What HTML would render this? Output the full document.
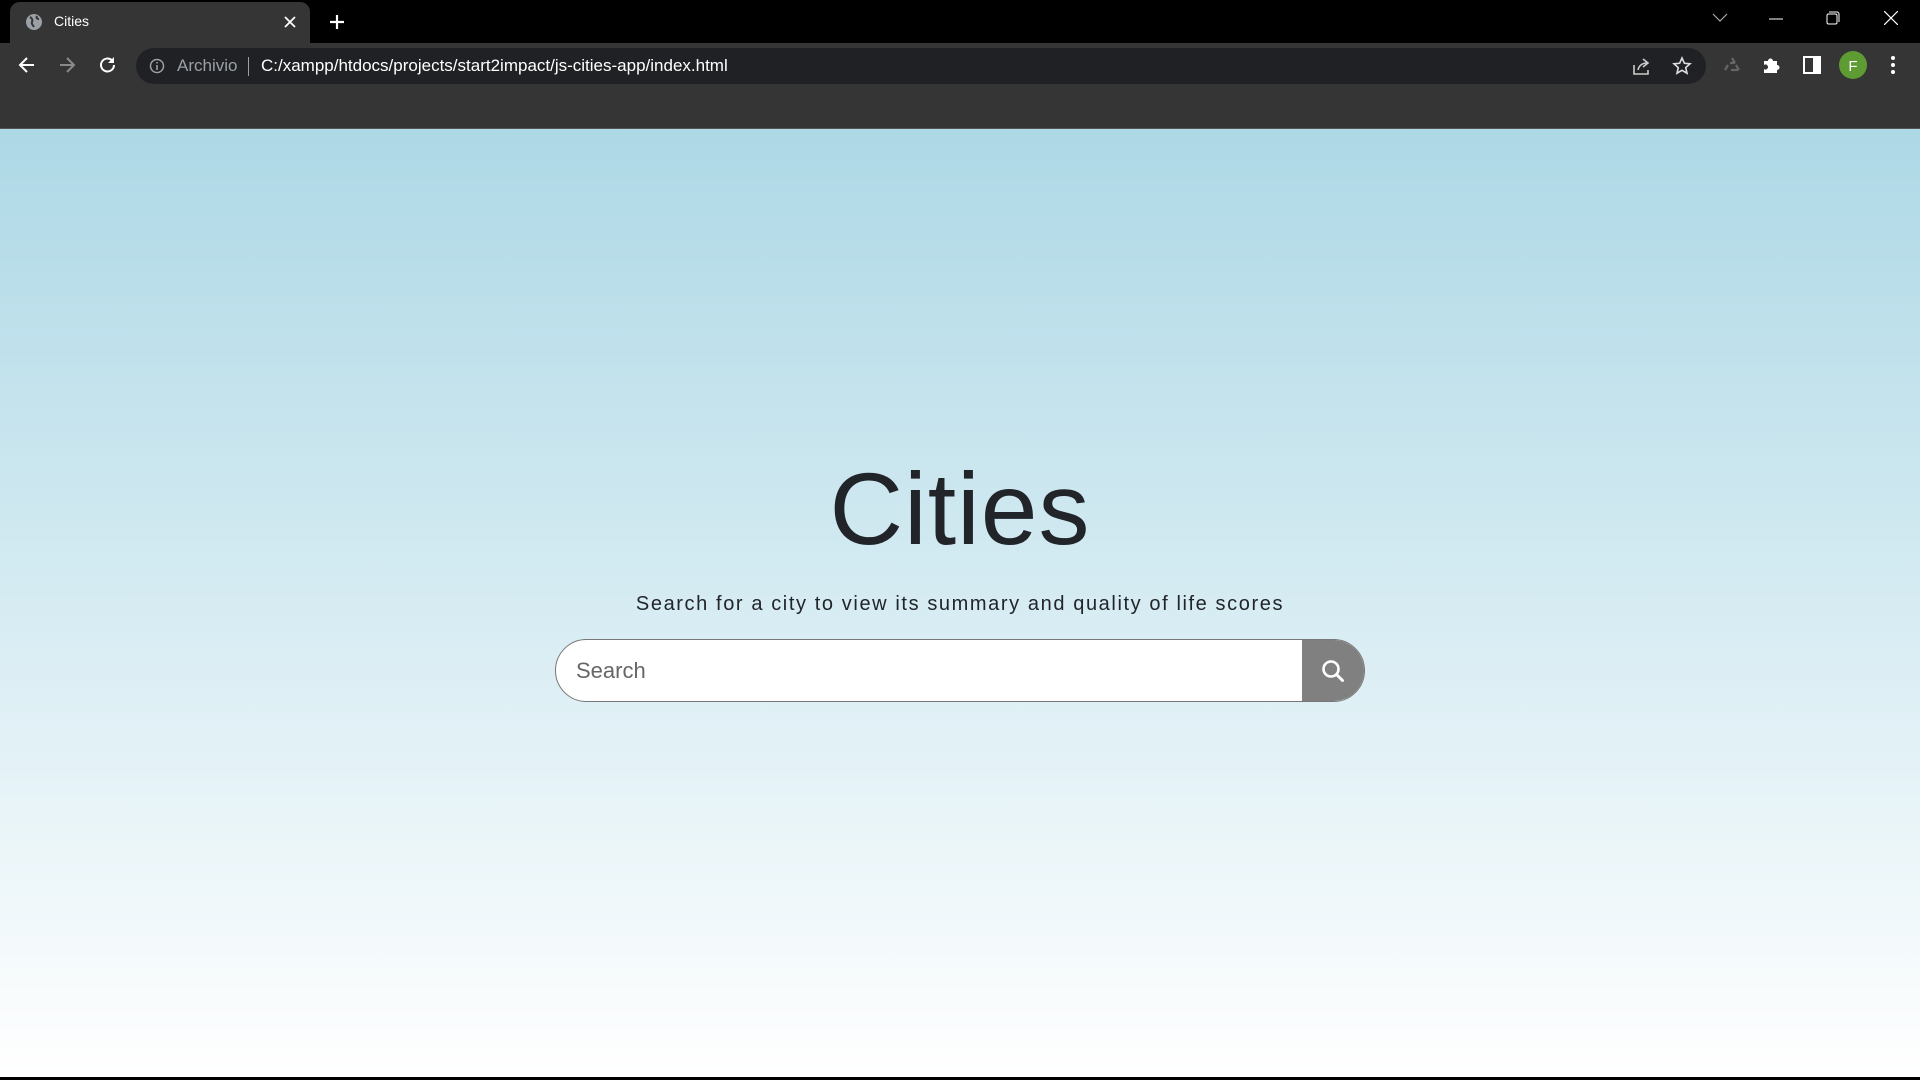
<!DOCTYPE html>
<html><head><meta charset="utf-8"><style>
*{margin:0;padding:0;box-sizing:border-box}
body{width:1920px;height:1080px;overflow:hidden;font-family:"Liberation Sans",sans-serif;background:#000;position:relative}
.tabbar{position:absolute;left:0;top:0;width:1920px;height:43px;background:#000}
.tab{position:absolute;left:10px;top:2px;width:300px;height:41px;background:#353535;border-radius:10px 10px 0 0}
.tab span{position:absolute;left:44px;top:11px;color:#fff;font-size:14px}
.toolbar{position:absolute;left:0;top:43px;width:1920px;height:86px;background:#353535;border-bottom:1px solid #555}
.omni{position:absolute;left:136px;top:5px;width:1570px;height:36px;background:#202124;border-radius:18px}
.omni .a{position:absolute;left:41px;top:8px;color:#9aa0a6;font-size:17px}
.omni .u{position:absolute;left:125px;top:8px;color:#fff;font-size:17px}
.omni .sep{position:absolute;left:112px;top:9px;width:1px;height:19px;background:#9aa0a6}
.page{position:absolute;left:0;top:129px;width:1920px;height:948px;background:linear-gradient(#add8e6,#ffffff)}
h1{position:absolute;left:0;width:1920px;top:329px;text-align:center;font-weight:normal;font-size:102px;color:#212529;line-height:1;letter-spacing:1px}
p{position:absolute;left:0;width:1920px;top:464px;text-align:center;font-size:20px;color:#212529;letter-spacing:1.6px}
.box{position:absolute;left:555px;top:510px;width:810px;height:63px;background:#fff;border:1px solid #777;border-radius:32px;overflow:hidden}
.box span{position:absolute;left:20px;top:18px;font-size:22px;color:#666}
.btn{position:absolute;right:0;top:0;width:62px;height:63px;background:#808080}
svg{position:absolute}
</style></head><body>
<div class="tabbar">
<div class="tab"><svg style="left:15px;top:11px" width="18" height="18" viewBox="0 0 18 18"><circle cx="9" cy="9" r="8" fill="#9aa0a6"/><path d="M5 4c2 1 3 3 2 5s1 3 2 5M12 3c-1 2 0 3 2 3" stroke="#353535" stroke-width="2" fill="none"/></svg><span>Cities</span>
<svg style="left:274px;top:14px" width="12" height="12"><path d="M1 1l10 10M11 1L1 11" stroke="#fff" stroke-width="1.8"/></svg></div>
<svg style="left:327px;top:12px" width="20" height="20"><path d="M10 3v14M3 10h14" stroke="#fff" stroke-width="2.2"/></svg>
<svg style="left:1712px;top:13px" width="16" height="10"><path d="M1 1l7 7 7-7" stroke="#aaa" fill="none" stroke-width="1.2"/></svg>
<svg style="left:1769px;top:18px" width="14" height="2"><path d="M0 1h14" stroke="#fff"/></svg>
<svg style="left:1826px;top:11px" width="14" height="14"><rect x="1" y="3" width="10" height="10" fill="none" stroke="#fff" rx="1.5"/><path d="M3 1h8a2 2 0 0 1 2 2v8" fill="none" stroke="#fff"/></svg>
<svg style="left:1884px;top:11px" width="14" height="14"><path d="M0 0l14 14M14 0L0 14" stroke="#fff" stroke-width="1.2"/></svg>
</div>
<div class="toolbar">
<svg style="left:17px;top:12px" width="20" height="20"><path d="M17 10H4M10 3l-7 7 7 7" stroke="#fff" stroke-width="2" fill="none"/></svg>
<svg style="left:57px;top:12px" width="20" height="20"><path d="M3 10h13M10 3l7 7-7 7" stroke="#8a8a8a" stroke-width="2" fill="none"/></svg>
<svg style="left:98px;top:12px" width="20" height="20"><path d="M16 10a6.5 6.5 0 1 1-2-4.7" stroke="#fff" stroke-width="2" fill="none"/><path d="M16 2v6h-6z" fill="#fff"/></svg>
<div class="omni">
<svg style="left:13px;top:10px" width="16" height="16"><circle cx="8" cy="8" r="6.5" stroke="#9aa0a6" stroke-width="1.5" fill="none"/><path d="M8 7v5M8 4v1.5" stroke="#9aa0a6" stroke-width="1.6"/></svg>
<span class="a">Archivio</span><div class="sep"></div><span class="u">C:/xampp/htdocs/projects/start2impact/js-cities-app/index.html</span>
<svg style="left:1495px;top:8px" width="20" height="20"><path d="M3 9v9h14v-4M7 14c1-5 5-7 9-7M12 3l5 4-5 4" stroke="#ccc" stroke-width="1.6" fill="none"/></svg>
<svg style="left:1536px;top:8px" width="20" height="20"><path d="M10 2l2.4 5.3 5.6.5-4.3 3.8 1.3 5.6L10 14.3 5 17.2l1.3-5.6L2 7.8l5.6-.5z" stroke="#ddd" stroke-width="1.6" fill="none"/></svg>
</div>
<svg style="left:1722px;top:12px" width="20" height="20"><path d="M10 3l3 5M13 8l-5 0M3 15l3-5M16 15H9M17 15l-3-5" stroke="#666" stroke-width="2.2" fill="none"/></svg>
<svg style="left:1762px;top:12px" width="20" height="20"><path d="M2 6h4a2.5 2.5 0 1 1 5 0h4v4a2.5 2.5 0 1 1 0 5v3H2v-4a2.5 2.5 0 1 0 0-4z" fill="#fff"/></svg>
<svg style="left:1803px;top:13px" width="18" height="18"><rect x="1" y="1" width="16" height="16" fill="none" stroke="#fff" stroke-width="2"/><rect x="10" y="1" width="7" height="16" fill="#fff"/></svg>
<svg style="left:1839px;top:8px" width="28" height="28"><circle cx="14" cy="14" r="14" fill="#5e9b33"/><text x="14" y="20" text-anchor="middle" font-family="Liberation Sans" font-size="15" fill="#fff">F</text></svg>
<svg style="left:1890px;top:12px" width="6" height="20"><circle cx="3" cy="3" r="2" fill="#fff"/><circle cx="3" cy="10" r="2" fill="#fff"/><circle cx="3" cy="17" r="2" fill="#fff"/></svg>
</div>
<div class="page">
<h1>Cities</h1>
<p>Search for a city to view its summary and quality of life scores</p>
<div class="box"><span>Search</span><div class="btn"><svg style="left:18px;top:18px" width="26" height="26"><circle cx="11" cy="11" r="7.5" stroke="#fff" stroke-width="2.6" fill="none"/><path d="M16.5 16.5l6 6" stroke="#fff" stroke-width="3" stroke-linecap="round"/></svg></div></div>
</div>
</body></html>
